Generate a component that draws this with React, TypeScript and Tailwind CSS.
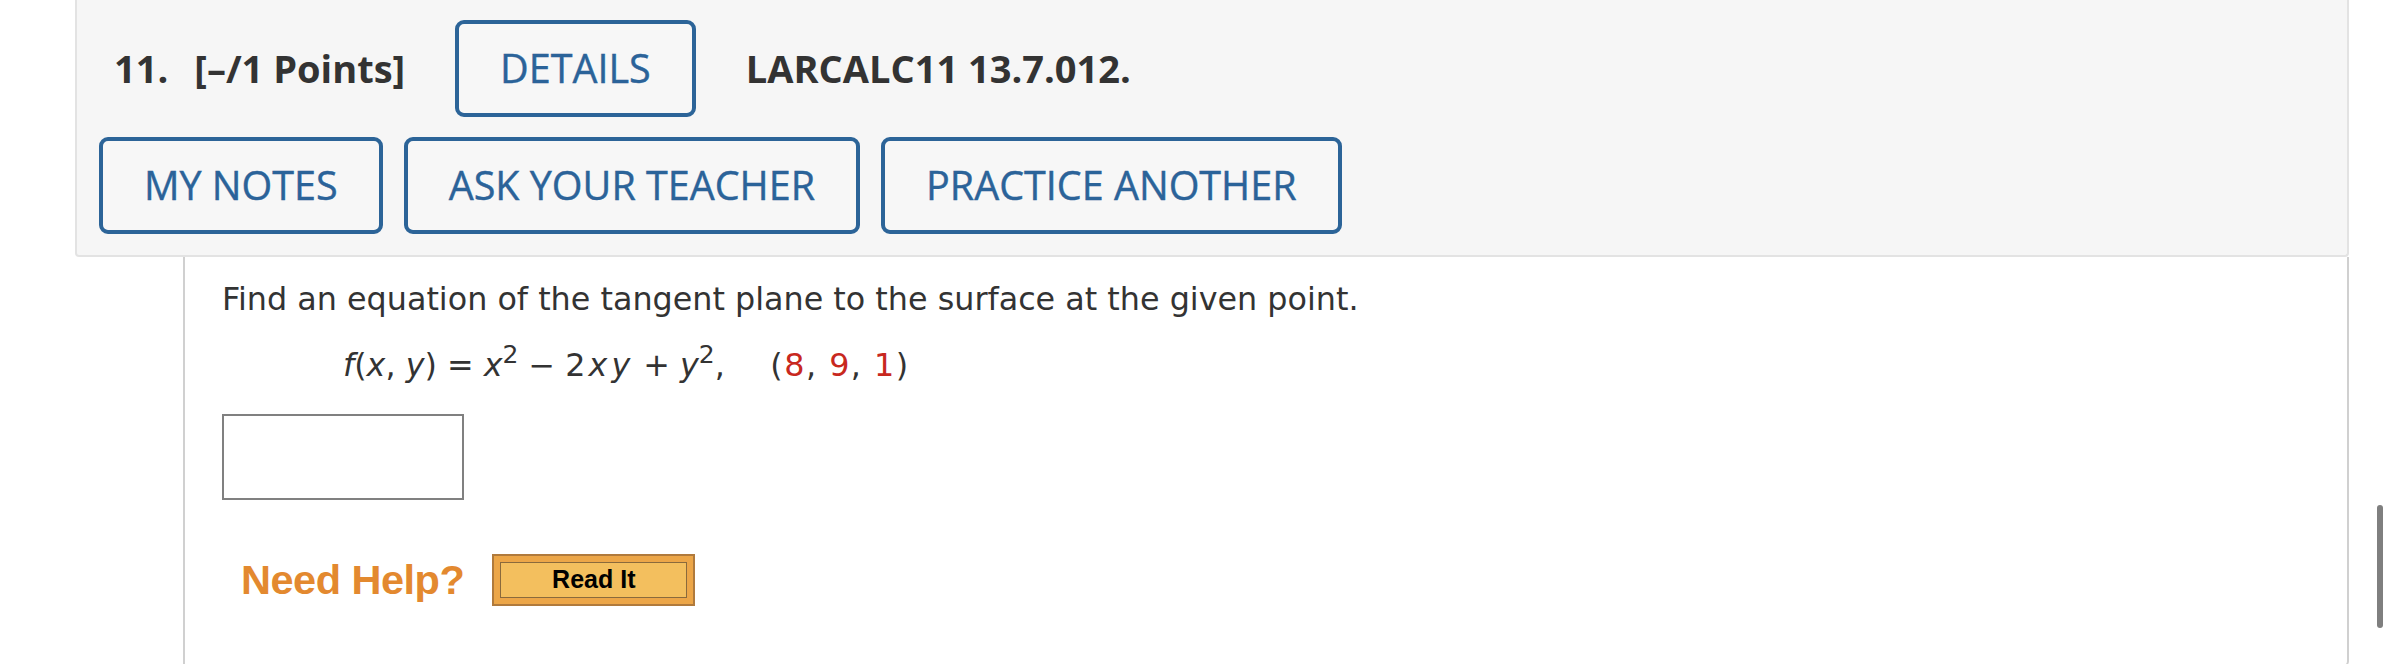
import React from 'react';

const btn =
  'h-[97px] flex items-center px-[41px] border-[4px] border-[#2c6498] rounded-[9px] text-[39.5px] text-[#2b6399] font-["Open_Sans",sans-serif] leading-none bg-[#f7f7f7] [-webkit-text-stroke:0.4px_#2b6399]';

const sup = 'text-[25px] relative -top-[13px] align-baseline';

export default function App() {
  return (
    <div className="w-[2388px] h-[664px] bg-white relative overflow-hidden">
      {/* question header */}
      <div className="ml-[75px] w-[2274px] bg-[#f6f6f6] border-x-2 border-b-2 border-[#e3e3e3] rounded-b-[4px] pt-[20px] pb-[21px] pl-[22px]">
        <div className="flex items-center ml-[15px] font-['Open_Sans',sans-serif] text-[#333333]">
          <span className="text-[38px] font-bold">11.</span>
          <span className="text-[38px] font-bold ml-[26px]">[–/1 Points]</span>
          <div className={`${btn} ml-[50px]`}>DETAILS</div>
          <span className="text-[38px] font-bold ml-[50px]">LARCALC11 13.7.012.</span>
        </div>
        <div className="flex gap-[21px] mt-[20px]">
          <div className={btn}>MY NOTES</div>
          <div className={btn}>ASK YOUR TEACHER</div>
          <div className={btn}>PRACTICE ANOTHER</div>
        </div>
      </div>

      {/* question body */}
      <div className="ml-[183px] w-[2166px] h-[410px] border-x-2 border-b-2 border-[#d0d0d0] rounded-br-[6px] pl-[37px] pt-[22px] font-['DejaVu_Sans',Verdana,sans-serif] text-[#333333]">
        <p className="text-[31.8px] leading-[40px]">Find an equation of the tangent plane to the surface at the given point.</p>
        <p className="text-[31.8px] leading-[40px] mt-[26px] ml-[121px]">
          <i>f</i>(<i>x</i>, <i>y</i>) = <i>x</i>
          <sup className={sup}>2</sup> − 2<i className="tracking-[4px] ml-[3px]">xy</i>
          <span className="ml-[9px]">+</span> <i>y</i>
          <sup className={sup}>2</sup>,{'\u00a0\u00a0\u00a0\u00a0'}
          <span className="tracking-[1.5px] ml-[5px]">
            (<span className="text-[#c8281e]">8</span>, <span className="text-[#c8281e]">9</span>,{' '}
            <span className="text-[#c8281e]">1</span>)
          </span>
        </p>
        <div className="mt-[29px] w-[242px] h-[86px] border-2 border-[#808080] bg-white" />
        <div className="flex items-center mt-[49px] ml-[19px]">
          <span className="text-[41.5px] font-bold text-[#e3892f] font-['Liberation_Sans',Arial,sans-serif] tracking-[-0.5px]">
            Need Help?
          </span>
          <div className="ml-[28px] w-[203px] h-[52px] border-2 border-[#b07a3c] bg-[#eca648] p-[6px]">
            <div className="h-full border border-[#8a6a3c] bg-[#f3bf5e] flex items-center justify-center text-[25px] font-bold text-black font-['Liberation_Sans',Arial,sans-serif]">
              Read It
            </div>
          </div>
        </div>
      </div>

      {/* scrollbar thumb */}
      <div className="absolute left-[2377px] top-[505px] w-[6px] h-[123px] rounded-full bg-[#7f7f7f]" />
    </div>
  );
}
